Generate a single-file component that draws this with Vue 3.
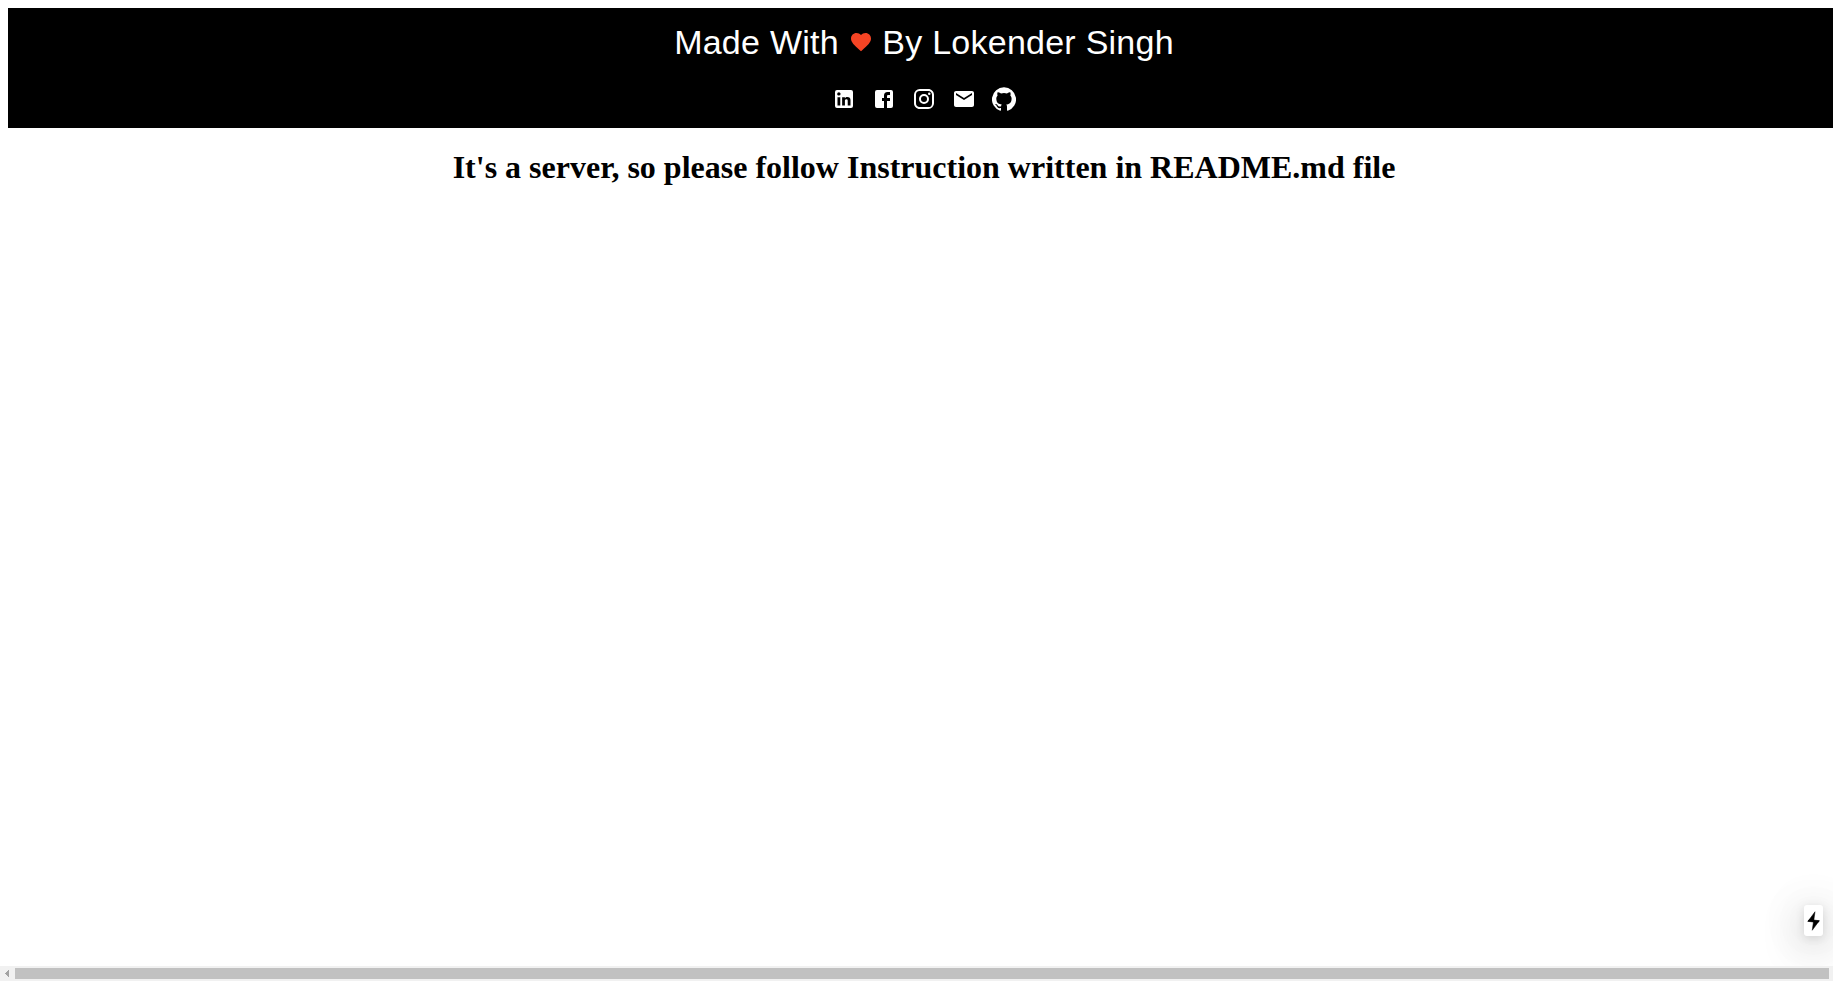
<script setup>
const links = [
  {
    name: 'LinkedIn',
    path: 'M19 3a2 2 0 0 1 2 2v14a2 2 0 0 1-2 2H5a2 2 0 0 1-2-2V5a2 2 0 0 1 2-2h14m-.5 15.5v-5.3a3.26 3.26 0 0 0-3.26-3.26c-.85 0-1.84.52-2.32 1.3v-1.11h-2.79v8.37h2.79v-4.93c0-.77.62-1.4 1.39-1.4a1.4 1.4 0 0 1 1.4 1.4v4.93h2.79M6.88 8.56a1.68 1.68 0 0 0 1.68-1.68c0-.93-.75-1.69-1.68-1.69a1.69 1.69 0 0 0-1.69 1.69c0 .93.76 1.68 1.69 1.68m1.39 9.94v-8.37H5.5v8.37h2.77z',
  },
  {
    name: 'Facebook',
    path: 'M5 3h14a2 2 0 0 1 2 2v14a2 2 0 0 1-2 2H5a2 2 0 0 1-2-2V5a2 2 0 0 1 2-2m13 2h-2.5A3.5 3.5 0 0 0 12 8.5V11h-2v3h2v7h3v-7h3v-3h-3V9a1 1 0 0 1 1-1h2V5z',
  },
  {
    name: 'Instagram',
    path: 'M7.8 2h8.4C19.4 2 22 4.6 22 7.8v8.4a5.8 5.8 0 0 1-5.8 5.8H7.8C4.6 22 2 19.4 2 16.2V7.8A5.8 5.8 0 0 1 7.8 2m-.2 2A3.6 3.6 0 0 0 4 7.6v8.8C4 18.39 5.61 20 7.6 20h8.8a3.6 3.6 0 0 0 3.6-3.6V7.6C20 5.61 18.39 4 16.4 4H7.6m9.65 1.5a1.25 1.25 0 0 1 1.25 1.25A1.25 1.25 0 0 1 17.25 8 1.25 1.25 0 0 1 16 6.75a1.25 1.25 0 0 1 1.25-1.25M12 7a5 5 0 0 1 5 5 5 5 0 0 1-5 5 5 5 0 0 1-5-5 5 5 0 0 1 5-5m0 2a3 3 0 0 0-3 3 3 3 0 0 0 3 3 3 3 0 0 0 3-3 3 3 0 0 0-3-3z',
  },
  {
    name: 'Email',
    path: 'M20 4H4c-1.1 0-1.99.9-1.99 2L2 18c0 1.1.9 2 2 2h16c1.1 0 2-.9 2-2V6c0-1.1-.9-2-2-2zm0 4l-8 5-8-5V6l8 5 8-5v2z',
  },
  {
    name: 'GitHub',
    path: 'M12 .3a12 12 0 0 0-3.8 23.4c.6.1.8-.3.8-.6v-2c-3.3.7-4-1.6-4-1.6-.6-1.4-1.4-1.8-1.4-1.8-1-.7.1-.7.1-.7 1.2 0 1.9 1.2 1.9 1.2 1 1.8 2.8 1.3 3.5 1 0-.8.4-1.3.7-1.6-2.7-.3-5.5-1.3-5.5-6 0-1.2.5-2.3 1.3-3.1-.2-.4-.6-1.6 0-3.2 0 0 1-.3 3.4 1.2a11.5 11.5 0 0 1 6 0c2.3-1.5 3.3-1.2 3.3-1.2.6 1.6.2 2.8 0 3.2.9.8 1.3 1.9 1.3 3.2 0 4.6-2.8 5.6-5.5 5.9.5.4.9 1 .9 2.2v3.3c0 .3.1.7.8.6A12 12 0 0 0 12 .3',
  },
]
</script>

<template>
  <div class="window">
    <div class="viewport">
      <header class="banner">
        <h4 class="credit">
          Made With
          <svg class="heart" viewBox="0 0 24 24" aria-hidden="true">
            <path d="M12 21.35l-1.45-1.32C5.4 15.36 2 12.28 2 8.5 2 5.42 4.42 3 7.5 3c1.74 0 3.41.81 4.5 2.09C13.09 3.81 14.76 3 16.5 3 19.58 3 22 5.42 22 8.5c0 3.78-3.4 6.86-8.55 11.54L12 21.35z" />
          </svg>
          By Lokender Singh
        </h4>
        <nav class="links">
          <a v-for="link in links" :key="link.name" class="link" :aria-label="link.name">
            <svg viewBox="0 0 24 24"><path :d="link.path" /></svg>
          </a>
        </nav>
      </header>
      <h1 class="notice">It's a server, so please follow Instruction written in README.md file</h1>

      <div class="indicator">
        <svg viewBox="0 0 60 80">
          <path d="M36 3L30.74 41H8L36 3Z" />
          <path d="M25 77L30.26 39H53L25 77Z" />
          <path d="M13.5 33.5L53 39L47.5 46.5L7 41.25L13.5 33.5Z" />
        </svg>
      </div>
    </div>

    <div class="scrollbar">
      <svg class="arrow" viewBox="0 0 15 15" shape-rendering="crispEdges"><path d="M9 4v7L5 7.5z" /></svg>
      <div class="thumb"></div>
    </div>
  </div>
</template>

<style>
body {
  margin: 0;
  overflow: hidden;
  background: #fff;
}
</style>

<style scoped>
.window {
  display: flex;
  flex-direction: column;
  height: 100vh;
  overflow: hidden;
}
.viewport {
  position: relative;
  flex: 1;
  box-sizing: border-box;
  padding: 8px 0 0 8px;
  overflow: hidden;
}
.banner {
  box-sizing: border-box;
  width: calc(100vw - 1px);
  height: 120px;
  padding-top: 13px;
  background: #000;
  color: #fff;
}
.credit {
  margin: 0;
  font-family: "Liberation Sans", Arial, sans-serif;
  font-size: 34px;
  font-weight: 400;
  line-height: 42px;
  letter-spacing: 0.00735em;
  text-align: center;
}
.heart {
  width: 24px;
  height: 24px;
  fill: #f54424;
}
.links {
  display: flex;
  justify-content: center;
  gap: 16px;
  margin-top: 24px;
}
.link,
.link svg {
  display: block;
  width: 24px;
  height: 24px;
  fill: #fff;
}
.notice {
  width: calc(100vw - 1px);
  margin: 21px 0 0;
  color: #000;
  font-family: "Liberation Serif", "Times New Roman", serif;
  font-size: 32px;
  font-weight: 700;
  line-height: 37px;
  text-align: center;
}
.indicator {
  position: absolute;
  right: 10px;
  bottom: 30px;
  box-sizing: border-box;
  width: 19px;
  height: 31px;
  padding: 5.5px 2px;
  border-radius: 3px;
  background: #fff;
  box-shadow: 0 11px 40px 0 rgba(0, 0, 0, 0.25), 0 2px 10px 0 rgba(0, 0, 0, 0.12),
    0 0 50px 0 rgba(0, 0, 0, 0.12);
}
.indicator svg {
  display: block;
  width: 15px;
  height: 20px;
  stroke: #000;
  stroke-width: 2;
}
.scrollbar {
  display: flex;
  align-items: center;
  box-sizing: border-box;
  height: 15px;
  padding-right: 4px;
  background: #f1f1f1;
}
.arrow {
  flex: none;
  width: 15px;
  height: 15px;
  fill: #a3a3a3;
}
.thumb {
  flex: 1;
  height: 11px;
  background: #c1c1c1;
}
</style>
